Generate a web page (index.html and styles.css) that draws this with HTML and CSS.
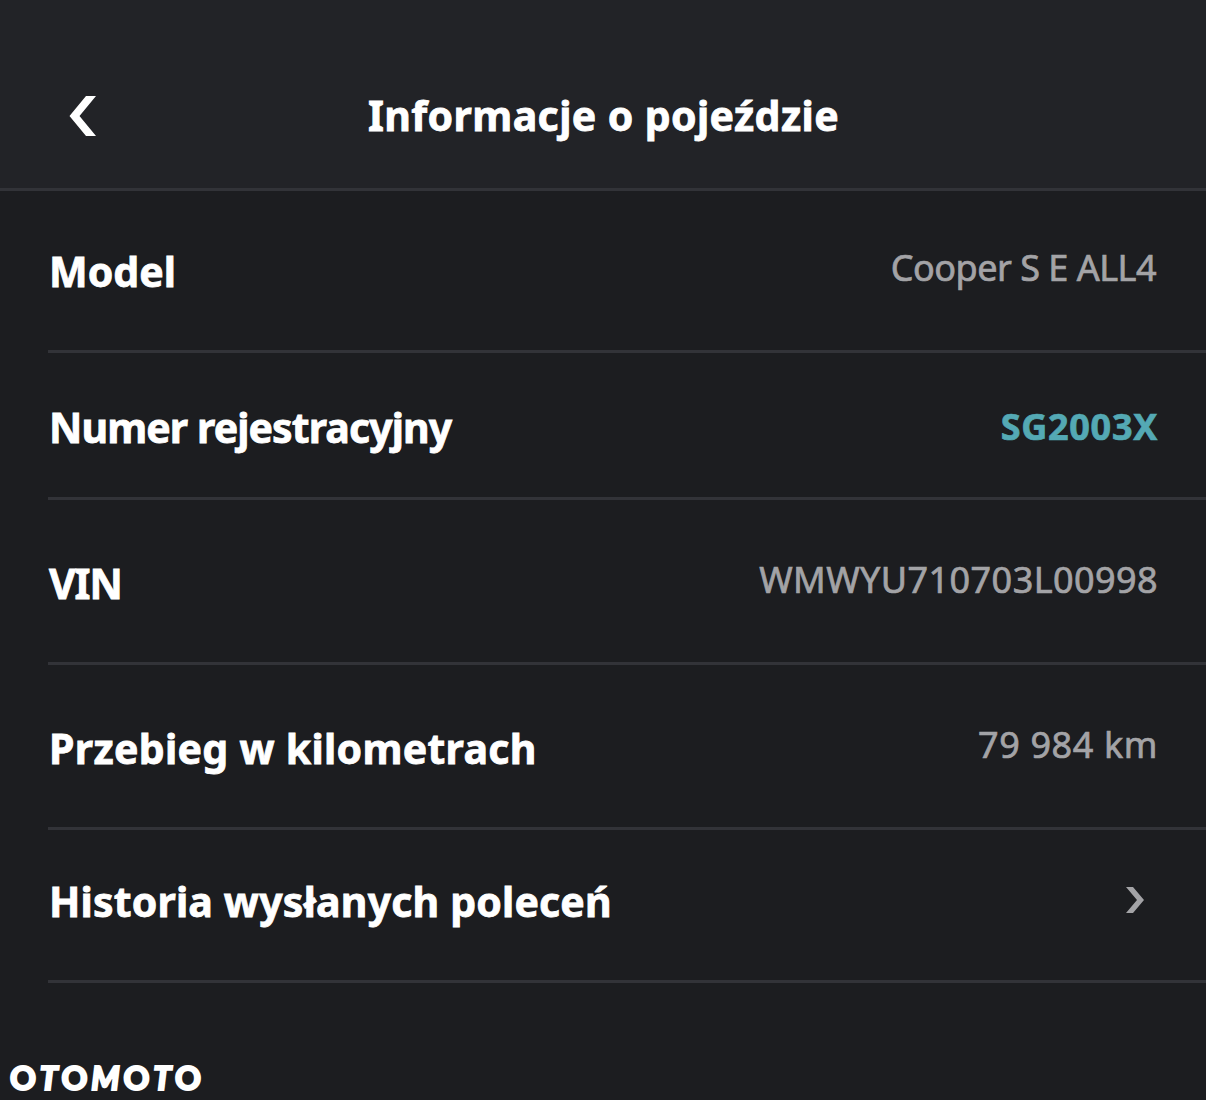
FILE: index.html
```html
<!DOCTYPE html>
<html lang="pl">
<head>
  <meta charset="UTF-8">
  <title>Informacje o pojeździe</title>
  <link rel="stylesheet" href="styles.css">
</head>
<body>
  <header class="header">
    <button class="back" aria-label="Wstecz">
      <svg width="27" height="40" viewBox="0 0 27 40"><path d="M16 0H26L9.5 20L26 40H16L-.5 20Z"/></svg>
    </button>
    <h1>Informacje o pojeździe</h1>
  </header>

  <main class="list">
    <div class="row model">
      <span class="label">Model</span>
      <span class="value">Cooper S E ALL4</span>
    </div>
    <div class="row plate">
      <span class="label">Numer rejestracyjny</span>
      <a class="value">SG2003X</a>
    </div>
    <div class="row vin">
      <span class="label">VIN</span>
      <span class="value">WMWYU710703L00998</span>
    </div>
    <div class="row mileage">
      <span class="label">Przebieg w kilometrach</span>
      <span class="value">79 984 km</span>
    </div>
    <div class="row history">
      <span class="label">Historia wysłanych poleceń</span>
      <svg class="chevron" width="18" height="26" viewBox="0 0 18 26"><path d="M0 0H7L18 13L7 26H0L11 13Z"/></svg>
    </div>
  </main>

  <footer class="logo">O<i>T</i>O<i>M</i>O<i>T</i>O</footer>
</body>
</html>
```

FILE: styles.css
```css
:root {
  --bg-color: #1c1d20;
  --header-bg: #222327;
  --line-color: #323338;
  --text-color: #ffffff;
  --value-color: #a3a3a6;
  --link-color: #54a9b4;
}

body {
  margin: 0;
  height: 1100px;
  overflow: hidden;
  background-color: var(--bg-color);
  color: var(--text-color);
  font-family: "Noto Sans", sans-serif;
}

.header {
  display: grid;
  grid-template-columns: 120px 1fr 120px;
  height: 188px;
  background-color: var(--header-bg);
  border-bottom: 3px solid var(--line-color);
}

.back {
  display: flex;
  align-items: flex-start;
  padding: 96px 0 0 70px;
  border: none;
  background: none;
  cursor: pointer;
}

.back svg {
  overflow: visible;
  fill: var(--text-color);
}

h1 {
  margin: 85px 0 0 1px;
  font-size: 41px;
  font-weight: bold;
  line-height: 60px;
  letter-spacing: 0.38px;
  text-align: center;
  white-space: nowrap;
  -webkit-text-stroke: 0.8px;
}

.row {
  display: flex;
  justify-content: space-between;
  align-items: flex-start;
  box-sizing: border-box;
  margin-left: 48px;
  padding-left: 1px;
  padding-right: 48px;
  border-bottom: 3px solid var(--line-color);
  white-space: nowrap;
}

.label {
  font-size: 41px;
  font-weight: bold;
  line-height: 60px;
  -webkit-text-stroke: 0.8px;
}

.value {
  font-size: 36px;
  line-height: 54px;
  color: var(--value-color);
  -webkit-text-stroke: 0.7px;
}

.model {
  height: 162px;
  padding-top: 50px;
}

.model .value {
  margin-right: 2px;
  letter-spacing: -0.5px;
}

.plate {
  height: 147px;
  padding-top: 44px;
}

.plate .label {
  letter-spacing: -0.9px;
}

.plate .value {
  font-weight: bold;
  line-height: 60px;
  letter-spacing: 0.7px;
  color: var(--link-color);
}

.vin,
.mileage {
  height: 165px;
  padding-top: 53px;
}

.vin .label {
  letter-spacing: -1.1px;
}

.vin .value {
  letter-spacing: 0.42px;
}

.mileage .label {
  letter-spacing: 0.3px;
}

.mileage .value {
  letter-spacing: 0.6px;
}

.history {
  height: 153px;
  padding-top: 41px;
}

.history .label {
  letter-spacing: 0.16px;
}

.chevron {
  margin: 16px 14px 0 0;
  fill: var(--value-color);
}

.logo {
  margin: 74px 0 0 10px;
  font-family: Lato, sans-serif;
  font-size: 32px;
  font-weight: 900;
  line-height: 41px;
  letter-spacing: 3.8px;
  -webkit-text-stroke: 2px;
}
```
